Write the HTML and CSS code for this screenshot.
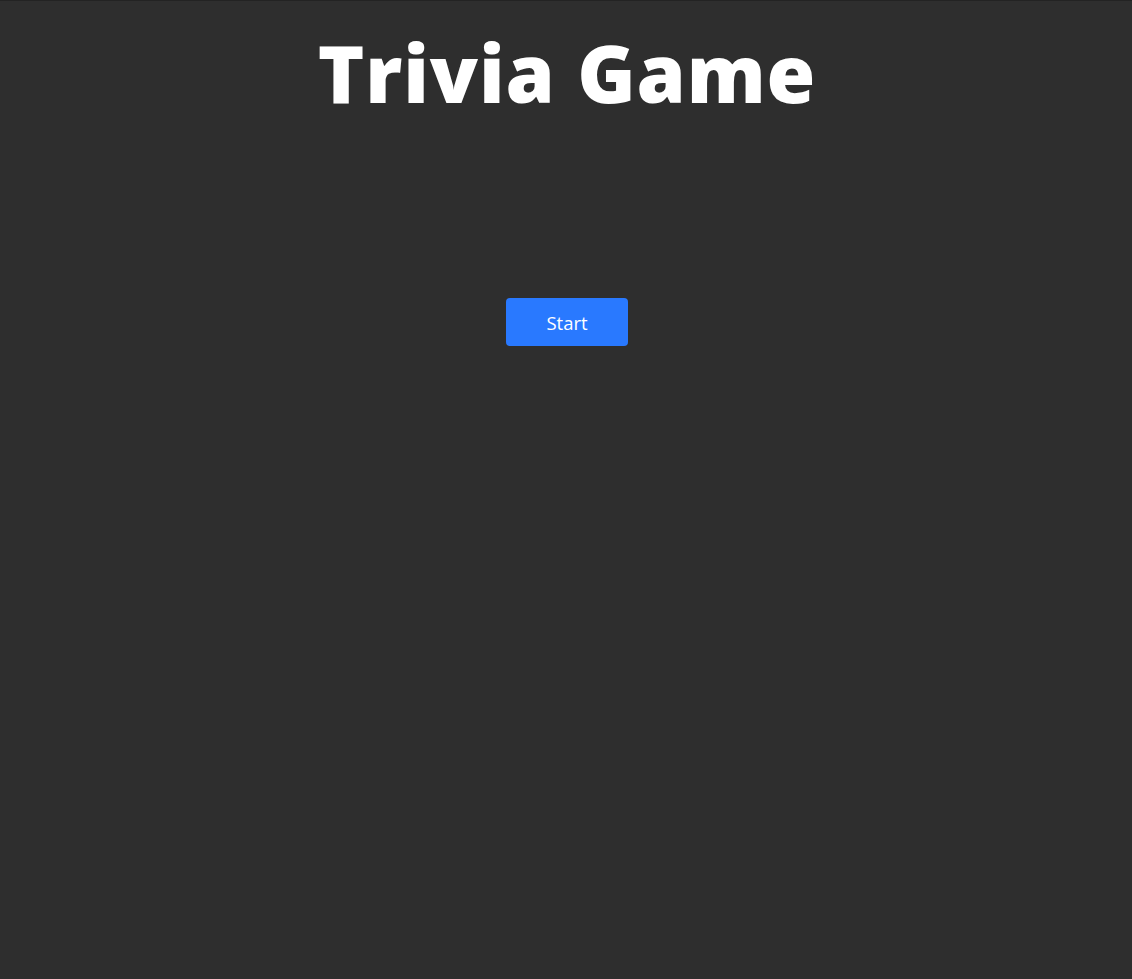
FILE: index.html
```html
<!DOCTYPE html>
<html lang="en">
<head>
<meta charset="utf-8">
<title>Trivia Game</title>
<link rel="stylesheet" href="styles.css">
</head>
<body>
<div class="app">
  <h1 class="title">Trivia Game</h1>
  <div class="controls">
    <button class="start-btn">Start</button>
  </div>
</div>
</body>
</html>
```
FILE: styles.css
```css
html, body {
  margin: 0;
  padding: 0;
  height: 100%;
  background: #2e2e2e;
}
body {
  border-top: 1px solid #232323;
  box-sizing: border-box;
  font-family: "Open Sans", "Noto Sans", sans-serif;
  color: #fff;
}
.app {
  display: flex;
  flex-direction: column;
  align-items: center;
  padding-left: 2px;
}
.title {
  margin: 32px 0 0;
  font-family: "Open Sans", sans-serif;
  font-weight: 800;
  font-size: 79px;
  line-height: 80px;
  letter-spacing: 0.9px;
  color: #ffffff;
}
.controls {
  margin-top: 185px;
  display: flex;
  justify-content: center;
}
.start-btn {
  width: 122px;
  height: 48px;
  border: none;
  border-radius: 4px;
  background: #2979ff;
  color: #fff;
  font-family: "Open Sans", "Noto Sans", sans-serif;
  font-size: 18.5px;
  padding: 0;
  cursor: pointer;
}
```
